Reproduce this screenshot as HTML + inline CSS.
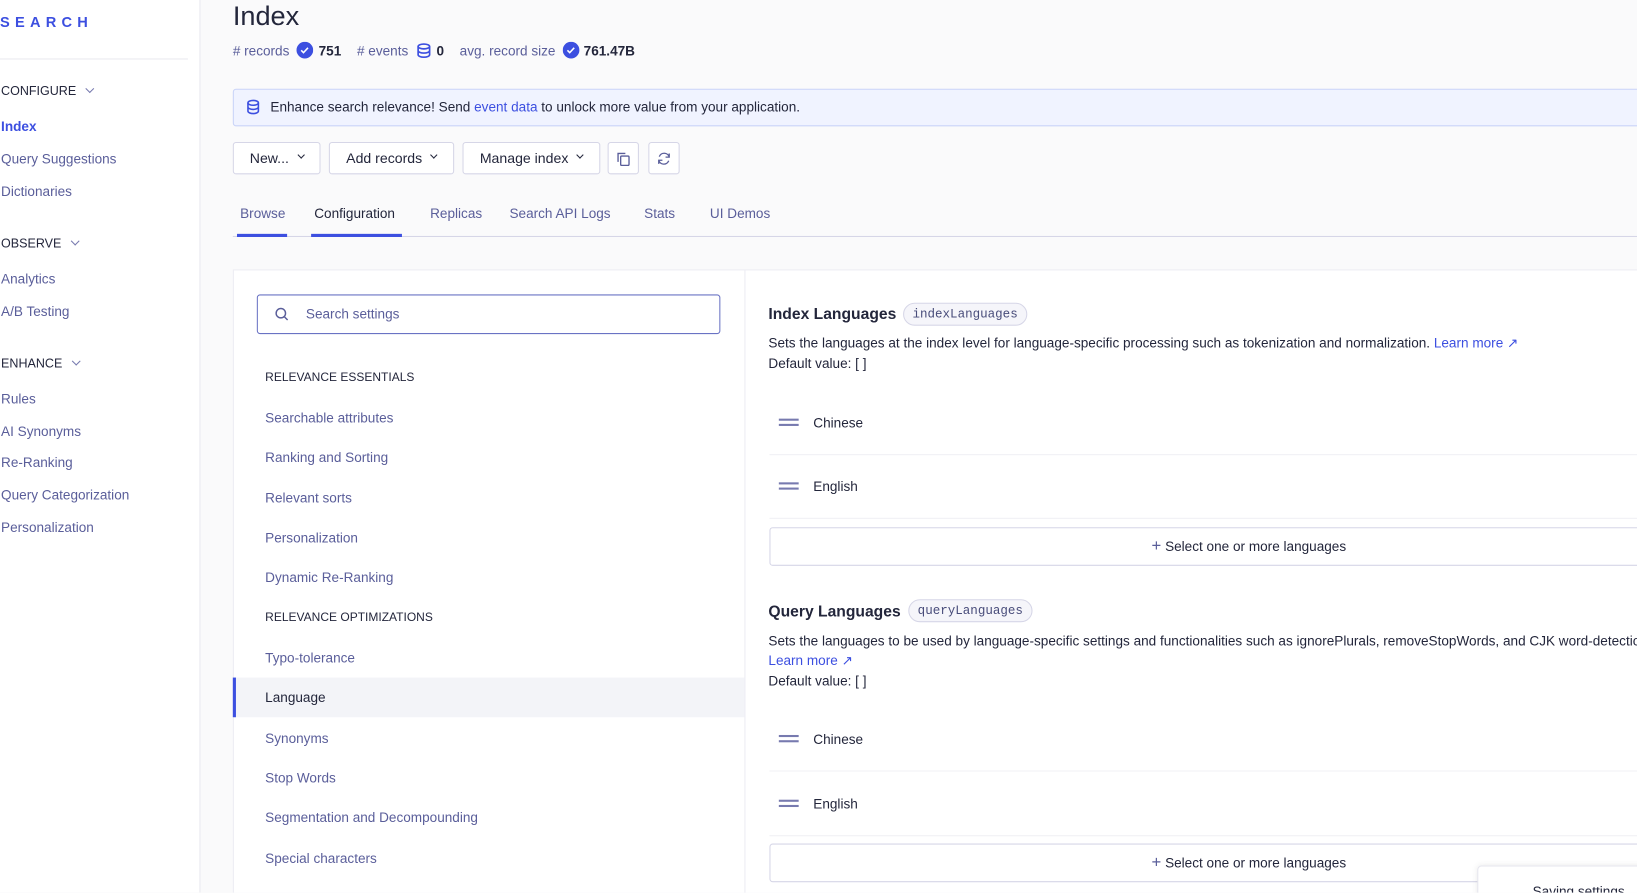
<!DOCTYPE html>
<html><head><meta charset="utf-8"><style>
*{box-sizing:border-box;margin:0;padding:0}
html,body{width:1637px;height:893px;overflow:hidden;background:#fafafb;font-family:"Liberation Sans",sans-serif;color:#23263b}
#w{position:absolute;left:0;top:0;width:1568px;height:855px;transform:scale(1.04401);transform-origin:0 0;overflow:hidden}
.a{position:absolute;white-space:nowrap}
.sb{position:absolute;left:0;top:0;width:192px;height:855px;background:#fff;border-right:1px solid #e8e8ef}
.nav{position:absolute;left:1px;font-size:13px;color:#5a5e9a;transform:translateY(-50%)}
.hd{position:absolute;left:1px;font-size:12px;color:#23263b;transform:translateY(-50%)}
.chev{display:inline-block;width:6px;height:6px;border-right:1.2px solid #777aaf;border-bottom:1.2px solid #777aaf;transform:rotate(45deg);margin-left:10px;position:relative;top:-3px}
.btn{position:absolute;top:136px;height:31px;background:#fff;border:1px solid #d6d6e7;border-radius:3px;font-size:13.5px;color:#23263b;display:flex;align-items:center;justify-content:center}
.btn .chev{margin-left:9px;border-color:#23263b;width:5px;height:5px}
.tab{position:absolute;top:197px;font-size:13px;color:#5a5e9a}
.li{position:absolute;left:254px;font-size:13px;color:#5a5e9a;transform:translateY(-50%)}
.sec{position:absolute;left:254px;font-size:11.5px;color:#23263b;transform:translateY(-50%)}
.t{position:absolute;font-size:13px;color:#23263b;transform:translateY(-50%);white-space:nowrap}
.chip{position:absolute;height:22px;border:1px solid #d6d6e7;background:#f5f5fa;border-radius:11px;font-family:"Liberation Mono",monospace;font-size:12px;color:#484c7a;padding:0 8px;line-height:20px}
.drag{position:absolute;left:746px;width:19px;height:7px;border-top:2px solid #777aaf;border-bottom:2px solid #777aaf}
.div{position:absolute;left:737px;width:831px;height:1px;background:#f0f0f4}
.sel{position:absolute;left:737px;width:840px;height:37px;border:1px solid #d6d6e7;border-radius:3px;background:#fff}
</style></head><body><div id="w">
<div class="sb">
<div class="a" style="left:0;top:13px;font-size:14px;font-weight:bold;letter-spacing:5px;color:#3c4fe0">SEARCH</div>
<div class="a" style="left:0;top:56px;width:180px;height:1px;background:#e8e8ef"></div>
<div class="hd" style="top:87px">CONFIGURE<span class="chev"></span></div>
<div class="nav" style="top:121px;color:#3c4fe0;font-weight:bold">Index</div>
<div class="nav" style="top:152px">Query Suggestions</div>
<div class="nav" style="top:183px">Dictionaries</div>
<div class="hd" style="top:233px">OBSERVE<span class="chev"></span></div>
<div class="nav" style="top:267px">Analytics</div>
<div class="nav" style="top:298px">A/B Testing</div>
<div class="hd" style="top:348px">ENHANCE<span class="chev"></span></div>
<div class="nav" style="top:382px">Rules</div>
<div class="nav" style="top:413px">AI Synonyms</div>
<div class="nav" style="top:443px">Re-Ranking</div>
<div class="nav" style="top:474px">Query Categorization</div>
<div class="nav" style="top:505px">Personalization</div>
</div>

<div class="a" style="left:223px;top:0px;font-size:26px;font-weight:500;color:#23263b">Index</div>
<div class="a" style="left:223px;top:40px;font-size:13px;color:#5a5e9a;display:flex;align-items:center">
# records <svg width="16" height="16" style="margin:0 5px 0 7px"><circle cx="8" cy="8" r="8" fill="#3c4fe0"/><path d="M4.5 8.2l2.2 2.2 4.3-4.6" stroke="#fff" stroke-width="1.5" fill="none"/></svg><b style="color:#23263b">751</b>
<span style="margin-left:15px"># events</span><svg width="14" height="15" style="margin:0 5px 0 8px" fill="none" stroke="#3c4fe0" stroke-width="1.6"><ellipse cx="7" cy="3.5" rx="5.5" ry="2.3"/><path d="M1.5 3.5v8c0 1.3 2.5 2.3 5.5 2.3s5.5-1 5.5-2.3v-8M1.5 7.5c0 1.3 2.5 2.3 5.5 2.3s5.5-1 5.5-2.3"/></svg><b style="color:#23263b">0</b>
<span style="margin-left:15px">avg. record size</span><svg width="16" height="16" style="margin:0 4px 0 7px"><circle cx="8" cy="8" r="8" fill="#3c4fe0"/><path d="M4.5 8.2l2.2 2.2 4.3-4.6" stroke="#fff" stroke-width="1.5" fill="none"/></svg><b style="color:#23263b">761.47B</b></div>

<div class="a" style="left:223px;top:85px;width:1360px;height:36px;background:#f0f3ff;border:1px solid #c9d3f8;border-radius:3px"></div>
<svg class="a" style="left:236px;top:95px" width="13" height="15" fill="none" stroke="#3c4fe0" stroke-width="1.5"><ellipse cx="6.5" cy="3.5" rx="5" ry="2.3"/><path d="M1.5 3.5v8c0 1.3 2.3 2.3 5 2.3s5-1 5-2.3v-8M1.5 7.5c0 1.3 2.3 2.3 5 2.3s5-1 5-2.3"/></svg>
<div class="a" style="left:259px;top:95px;font-size:13px;color:#23263b">Enhance search relevance! Send <span style="color:#3c4fe0">event data</span> to unlock more value from your application.</div>

<div class="btn" style="left:223px;width:84px">New...<span class="chev"></span></div>
<div class="btn" style="left:315px;width:120px">Add records<span class="chev"></span></div>
<div class="btn" style="left:443px;width:132px">Manage index<span class="chev"></span></div>
<div class="btn" style="left:582px;width:30px"><svg width="14" height="14" fill="none" stroke="#5a5e9a" stroke-width="1.3"><rect x="4.5" y="4.5" width="8" height="9" rx="1"/><path d="M2 10V2h7"/></svg></div>
<div class="btn" style="left:621px;width:30px"><svg width="14" height="14" fill="none" stroke="#5a5e9a" stroke-width="1.3"><path d="M12 5.5A5 5 0 0 0 2.5 5M2 8.5A5 5 0 0 0 11.5 9M12 2v3.5H8.5M2 12V8.5h3.5"/></svg></div>

<div class="tab" style="left:230px">Browse</div>
<div class="tab" style="left:301px;color:#23263b">Configuration</div>
<div class="tab" style="left:412px">Replicas</div>
<div class="tab" style="left:488px">Search API Logs</div>
<div class="tab" style="left:617px">Stats</div>
<div class="tab" style="left:680px">UI Demos</div>
<div class="a" style="left:223px;top:226px;width:1345px;height:1px;background:#d6d6e7"></div>
<div class="a" style="left:227px;top:224px;width:48px;height:3px;background:#3c4fe0"></div>
<div class="a" style="left:298px;top:224px;width:87px;height:3px;background:#3c4fe0"></div>

<div class="a" style="left:223px;top:258px;width:1360px;height:620px;background:#fff;border:1px solid #ececf2"></div>
<div class="a" style="left:713px;top:259px;width:1px;height:600px;background:#ececf2"></div>
<div class="a" style="left:246px;top:282px;width:444px;height:38px;border:1px solid #6a73c4;border-radius:3px;background:#fff"></div>
<svg class="a" style="left:263px;top:294px" width="14" height="14" fill="none" stroke="#5a5e9a" stroke-width="1.4"><circle cx="6" cy="6" r="4.5"/><path d="M9.5 9.5l3 3"/></svg>
<div class="a" style="left:293px;top:293px;font-size:13px;color:#5a5e9a">Search settings</div>

<div class="sec" style="top:362px">RELEVANCE ESSENTIALS</div>
<div class="li" style="top:400px">Searchable attributes</div>
<div class="li" style="top:438px">Ranking and Sorting</div>
<div class="li" style="top:477px">Relevant sorts</div>
<div class="li" style="top:515px">Personalization</div>
<div class="li" style="top:553px">Dynamic Re-Ranking</div>
<div class="sec" style="top:592px">RELEVANCE OPTIMIZATIONS</div>
<div class="li" style="top:630px">Typo-tolerance</div>
<div class="a" style="left:223px;top:649px;width:490px;height:38px;background:#f3f4f8;border-left:3px solid #3c4fe0"></div>
<div class="li" style="top:668px;color:#23263b">Language</div>
<div class="li" style="top:707px">Synonyms</div>
<div class="li" style="top:745px">Stop Words</div>
<div class="li" style="top:783px">Segmentation and Decompounding</div>
<div class="li" style="top:822px">Special characters</div>

<div class="t" style="left:736px;top:301px;font-size:15px;font-weight:bold">Index Languages</div>
<div class="chip" style="left:865px;top:290px">indexLanguages</div>
<div class="t" style="left:736px;top:329px">Sets the languages at the index level for language-specific processing such as tokenization and normalization. <span style="color:#3c4fe0">Learn more ↗</span></div>
<div class="t" style="left:736px;top:348px">Default value: [ ]</div>
<div class="drag" style="top:401px"></div><div class="t" style="left:779px;top:405px">Chinese</div>
<div class="div" style="top:435px"></div>
<div class="drag" style="top:462px"></div><div class="t" style="left:779px;top:466px">English</div>
<div class="div" style="top:496px"></div>
<div class="sel" style="top:505px"></div>
<div class="t" style="left:1103px;top:524px"><span style="color:#5a5e9a;font-size:16px">+</span> Select one or more languages</div>

<div class="t" style="left:736px;top:586px;font-size:15px;font-weight:bold">Query Languages</div>
<div class="chip" style="left:870px;top:574px">queryLanguages</div>
<div class="t" style="left:736px;top:614px">Sets the languages to be used by language-specific settings and functionalities such as ignorePlurals, removeStopWords, and CJK word-detection.</div>
<div class="t" style="left:736px;top:633px;color:#3c4fe0">Learn more ↗</div>
<div class="t" style="left:736px;top:652px">Default value: [ ]</div>
<div class="drag" style="top:704px"></div><div class="t" style="left:779px;top:708px">Chinese</div>
<div class="div" style="top:738px"></div>
<div class="drag" style="top:766px"></div><div class="t" style="left:779px;top:770px">English</div>
<div class="div" style="top:800px"></div>
<div class="sel" style="top:808px"></div>
<div class="t" style="left:1103px;top:827px"><span style="color:#5a5e9a;font-size:16px">+</span> Select one or more languages</div>

<div class="a" style="left:1415px;top:829px;width:170px;height:40px;background:#fff;border:1px solid #e6e6ee;border-radius:4px;box-shadow:0 0 6px rgba(0,0,0,.08)"></div>
<div class="a" style="left:1468px;top:846px;font-size:13px;color:#23263b">Saving settings</div>
</div></body></html>
